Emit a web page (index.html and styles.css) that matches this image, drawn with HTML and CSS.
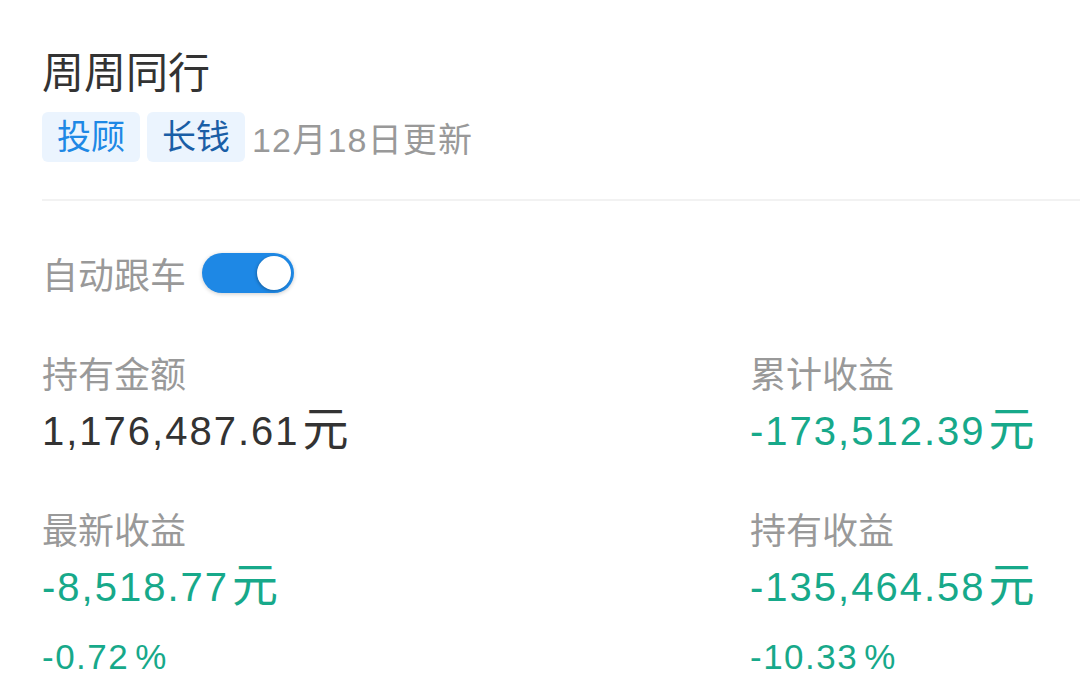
FILE: index.html
```html
<!DOCTYPE html>
<html lang="zh-CN">
<head>
    <meta charset="UTF-8">
    <meta name="viewport" content="width=device-width, initial-scale=1.0">
    <title>周周同行</title>
    <link rel="stylesheet" href="styles.css">
</head>
<body>
    <div class="card">
        <div class="header">
            <h1 class="title">周周同行</h1>
            <div class="tags">
                <span class="tag tag-blue">投顾</span>
                <span class="tag tag-dark">长钱</span>
                <span class="update">12月18日更新</span>
            </div>
        </div>

        <div class="follow">
            <span class="follow-label">自动跟车</span>
            <div class="switch on"><span class="knob"></span></div>
        </div>

        <div class="stats">
            <div class="stat">
                <div class="stat-label">持有金额</div>
                <div class="stat-value">1,176,487.61<span class="unit">元</span></div>
            </div>
            <div class="stat">
                <div class="stat-label">累计收益</div>
                <div class="stat-value down">-173,512.39<span class="unit">元</span></div>
            </div>
            <div class="stat">
                <div class="stat-label">最新收益</div>
                <div class="stat-value down">-8,518.77<span class="unit">元</span></div>
                <div class="stat-rate down">-0.72<span class="unit">%</span></div>
            </div>
            <div class="stat">
                <div class="stat-label">持有收益</div>
                <div class="stat-value down">-135,464.58<span class="unit">元</span></div>
                <div class="stat-rate down">-10.33<span class="unit">%</span></div>
            </div>
        </div>
    </div>
</body>
</html>
```

FILE: styles.css
```css
* {
    margin: 0;
    padding: 0;
    box-sizing: border-box;
}

body {
    font-family: "Liberation Sans", "Noto Sans CJK SC", sans-serif;
    background: #fff;
    color: #333;
    overflow: hidden;
}

.card {
    padding: 49px 0 0 42px;
}

.header {
    border-bottom: 2px solid #f2f2f2;
    padding-bottom: 37px;
}

.title {
    font-size: 42px;
    font-weight: normal;
    line-height: 50px;
    color: #333;
    margin-bottom: 13px;
}

.tags {
    display: flex;
    align-items: center;
    gap: 7px;
}

.tag {
    font-size: 34px;
    line-height: 50px;
    height: 50px;
    padding: 0 15px;
    border-radius: 6px;
    background: #ebf4fe;
}

.tag-blue {
    color: #1e88e5;
}

.tag-dark {
    color: #1a5ea6;
}

.update {
    font-size: 34px;
    letter-spacing: 1.2px;
    color: #999;
}

.follow {
    display: flex;
    align-items: center;
    gap: 16px;
    margin-top: 52px;
    height: 40px;
}

.follow-label {
    font-size: 36px;
    color: #999;
}

.switch {
    width: 92px;
    height: 40px;
    border-radius: 20px;
    background: #1e88e5;
    position: relative;
    box-shadow: 0 1px 4px rgba(0, 0, 0, 0.2);
}

.switch .knob {
    position: absolute;
    top: 3px;
    right: 3px;
    width: 34px;
    height: 34px;
    border-radius: 50%;
    background: #fff;
    box-shadow: -1px 1px 3px rgba(0, 0, 0, 0.25);
}

.stats {
    display: grid;
    grid-template-columns: 708px 1fr;
    row-gap: 55px;
    margin-top: 61px;
}

.stat-label {
    font-size: 36px;
    line-height: 44px;
    color: #999;
}

.stat-value {
    font-size: 40px;
    line-height: 48px;
    letter-spacing: 2px;
    margin-top: 9px;
    color: #333;
}

.stat-value .unit {
    font-size: 46px;
    line-height: 40px;
    letter-spacing: 0;
    margin-left: 3px;
}

.stat-rate {
    font-size: 35px;
    line-height: 40px;
    letter-spacing: 1.5px;
    margin-top: 26px;
}

.stat-rate .unit {
    letter-spacing: 0;
    margin-left: 6px;
}

.down {
    color: #17a98a;
}
```
